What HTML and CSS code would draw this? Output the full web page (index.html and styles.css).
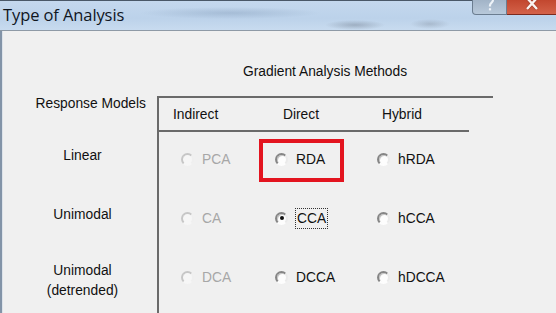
FILE: index.html
```html
<!DOCTYPE html>
<html lang="en">
<head>
  <meta charset="UTF-8">
  <title>Type of Analysis</title>
  <link rel="stylesheet" href="styles.css">
</head>
<body>
  <div class="window">
    <div class="titlebar">
      <span class="title">Type of Analysis</span>
      <div class="caption-buttons">
        <span class="btn-help">
          <svg width="10" height="12" viewBox="0 0 10 12">
            <path d="M2 -1 C2 -3 8 -3 8 0 C8 2.5 5 3 5 5.5 L5 6.5" fill="none" stroke="#eef3f8" stroke-width="2.2"/>
            <rect x="3.9" y="8.2" width="2.2" height="2.2" fill="#eef3f8"/>
          </svg>
        </span>
        <span class="btn-close">
          <svg width="14" height="11" viewBox="0 0 14 11">
            <path d="M2 -2 L12 9 M12 -2 L2 9" stroke="#5a1a10" stroke-width="3.6" opacity="0.35"/>
            <path d="M2 -2 L12 9 M12 -2 L2 9" stroke="#fbf3f1" stroke-width="2.4"/>
          </svg>
        </span>
      </div>
    </div>

    <div class="client">
      <div class="group-title">Gradient Analysis Methods</div>

      <div class="grid">
        <div class="label head-label">Response Models</div>
        <div class="cell head-cell">
          <div class="heads">
            <span>Indirect</span>
            <span>Direct</span>
            <span>Hybrid</span>
          </div>
        </div>

        <div class="label">Linear</div>
        <div class="cell">
          <div class="radios">
            <label class="option disabled"><span class="radio"></span>PCA</label>
            <label class="option"><span class="radio"></span>RDA</label>
            <label class="option"><span class="radio"></span>hRDA</label>
          </div>
        </div>

        <div class="label">Unimodal</div>
        <div class="cell">
          <div class="radios">
            <label class="option disabled"><span class="radio"></span>CA</label>
            <label class="option"><span class="radio checked"></span><span class="focus">CCA</span></label>
            <label class="option"><span class="radio"></span>hCCA</label>
          </div>
        </div>

        <div class="label label-two">Unimodal<br>(detrended)</div>
        <div class="cell">
          <div class="radios">
            <label class="option disabled"><span class="radio"></span>DCA</label>
            <label class="option"><span class="radio"></span>DCCA</label>
            <label class="option"><span class="radio"></span>hDCCA</label>
          </div>
        </div>
      </div>

      <div class="highlight"></div>
    </div>
  </div>
</body>
</html>
```

FILE: styles.css
```css
* { box-sizing: border-box; }

body {
  margin: 0;
  background: #f0f0f0;
  font-family: 'Liberation Sans', Arial, sans-serif;
}

.window {
  width: 556px;
  height: 313px;
  overflow: hidden;
  display: flex;
  flex-direction: column;
}

.titlebar {
  height: 31px;
  flex: none;
  display: flex;
  align-items: flex-start;
  border-top: 1px solid #4a5868;
  border-bottom: 1px solid #8e9aa6;
  background:
    radial-gradient(ellipse 90px 6px at 230px 12px, rgba(120, 145, 175, 0.35), transparent),
    radial-gradient(ellipse 30px 5px at 355px 24px, rgba(90, 100, 115, 0.35), transparent),
    radial-gradient(ellipse 20px 5px at 430px 23px, rgba(110, 120, 135, 0.3), transparent),
    linear-gradient(180deg, #c4d8ee 0%, #bcd2ea 60%, #c8dbef 100%);
}

.title {
  padding: 2px 0 0 3px;
  font-family: 'Open Sans', 'Noto Sans', sans-serif;
  font-size: 16.5px;
  color: #10161e;
  letter-spacing: -0.1px;
}

.caption-buttons {
  margin-left: auto;
  margin-top: -1px;
  display: flex;
}

.btn-help,
.btn-close {
  height: 15px;
  display: flex;
  justify-content: center;
  align-items: flex-start;
  overflow: hidden;
}

.btn-help {
  width: 35px;
  border: 1px solid #6b7d90;
  border-top: none;
  border-radius: 0 0 0 4px;
  background: linear-gradient(180deg, #a2b4c7, #b8c9da);
}

.btn-close {
  width: 49px;
  border-bottom: 1px solid #7c2a1e;
  background: linear-gradient(180deg, #c2472f, #d46249);
}

.client {
  flex: 1;
  position: relative;
  display: flex;
  flex-direction: column;
  border-left: 2px solid #8394a8;
  box-shadow: inset 1px 0 0 #dde3ea;
  font-size: 13.8px;
  color: #111;
}

.group-title {
  padding: 33px 0 0 241px;
  line-height: 16px;
  margin-bottom: 16px;
}

.grid {
  flex: 1;
  display: grid;
  grid-template-columns: 155px 336px;
  grid-template-rows: 36px 59px 59px 1fr;
}

.label {
  padding: 16px 0 0 6px;
  line-height: 16px;
  text-align: center;
}

.head-label {
  padding: 0 11px 0 0;
  text-align: right;
}

.label-two {
  padding-top: 11px;
  line-height: 20px;
}

.cell {
  border-left: 2px solid #6a6a6a;
}

.head-cell {
  border-top: 2px solid #6a6a6a;
}

.heads {
  width: 310px;
  height: 34px;
  padding-left: 14px;
  display: grid;
  grid-template-columns: 110px 99px auto;
  align-items: center;
  border-bottom: 2px solid #6a6a6a;
}

.radios {
  padding: 19px 0 0 22px;
  display: grid;
  grid-template-columns: 94px 102px auto;
}

.option {
  display: flex;
  align-items: center;
  gap: 8px;
  height: 16px;
  white-space: nowrap;
}

.option.disabled {
  color: #a7a7a7;
}

.radio {
  width: 13px;
  height: 13px;
  flex: none;
  position: relative;
  border-radius: 50%;
  border: 2px solid;
  border-color: #858585 #eaeaea #fdfdfd #858585;
  background: #fdfdfd;
  box-shadow: inset 1px 1px 0 #c8c8c8;
}

.disabled .radio {
  border-color: #c6c6c6 #efefef #f6f6f6 #c6c6c6;
  background: #f6f6f6;
  box-shadow: none;
}

.radio.checked::after {
  content: "";
  position: absolute;
  left: 2.5px;
  top: 2.5px;
  width: 4px;
  height: 4px;
  border-radius: 50%;
  background: #111;
}

.focus {
  padding: 2px 1px;
  outline: 1px dotted #333;
}

.highlight {
  position: absolute;
  left: 257px;
  top: 108px;
  width: 85px;
  height: 43px;
  border: 4px solid #e3141f;
}
```
